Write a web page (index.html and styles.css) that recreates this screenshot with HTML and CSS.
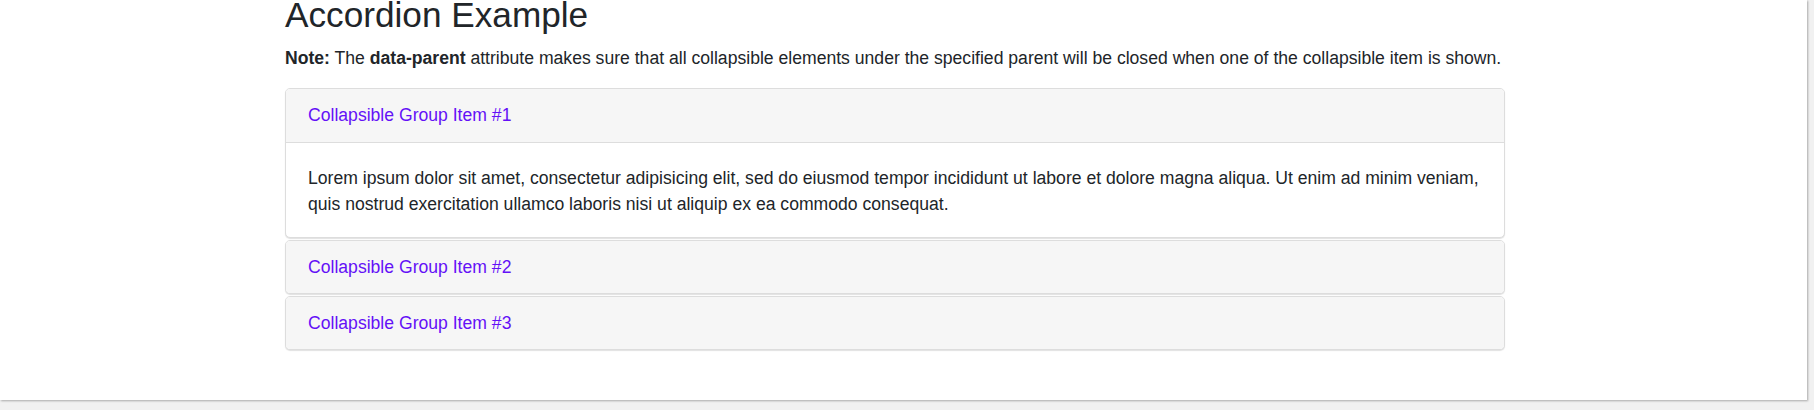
FILE: index.html
```html
<!DOCTYPE html>
<html lang="en">
<head>
<meta charset="utf-8">
<title>Accordion Example</title>
<link rel="stylesheet" href="styles.css">
</head>
<body>
<div class="frame">
  <div class="container">
    <h2 class="title">Accordion Example</h2>
    <p class="note"><strong>Note:</strong> The <strong>data-parent</strong> attribute makes sure that all collapsible elements under the specified parent will be closed when one of the collapsible item is shown.</p>
    <div class="panel-group">
      <div class="panel">
        <div class="panel-heading"><a class="panel-link" href="#c1">Collapsible Group Item #1</a></div>
        <div class="panel-body">Lorem ipsum dolor sit amet, consectetur adipisicing elit, sed do eiusmod tempor incididunt ut labore et dolore magna aliqua. Ut enim ad minim veniam, quis nostrud exercitation ullamco laboris nisi ut aliquip ex ea commodo consequat.</div>
      </div>
      <div class="panel">
        <div class="panel-heading"><a class="panel-link" href="#c2">Collapsible Group Item #2</a></div>
      </div>
      <div class="panel">
        <div class="panel-heading"><a class="panel-link" href="#c3">Collapsible Group Item #3</a></div>
      </div>
    </div>
  </div>
</div>
</body>
</html>
```

FILE: styles.css
```css
html, body {
  margin: 0;
  padding: 0;
}
body {
  background: #f1f1f1;
  font-family: "Liberation Sans", Arial, Helvetica, sans-serif;
  color: #212529;
  width: 1814px;
  height: 410px;
  overflow: hidden;
}
.frame {
  width: 1807px;
  height: 400px;
  background: #ffffff;
  box-shadow: 1px 1px 2px rgba(0, 0, 0, 0.3);
  overflow: hidden;
}
.container {
  width: 1220px;
  padding-left: 285px;
  padding-top: 1px;
}
.title {
  font-size: 35.2px;
  line-height: 28px;
  font-weight: normal;
  margin: 0 0 16px 0;
  color: #212529;
}
.note {
  font-size: 17.6px;
  line-height: 26.4px;
  margin: 0 0 17px 0;
}
.note strong {
  font-weight: bold;
}
.panel-group {
  display: flex;
  flex-direction: column;
  gap: 2px;
}
.panel {
  border: 1px solid #dddddd;
  border-radius: 5px;
  background: #ffffff;
  box-shadow: 0 1px 1px rgba(0, 0, 0, 0.12);
  overflow: hidden;
}
.panel-heading {
  background: #f6f6f6;
  padding: 13px 22px;
  font-size: 17.6px;
  line-height: 26.4px;
}
.panel-link {
  color: #6411f7;
  text-decoration: none;
}
.panel-body {
  border-top: 1px solid #dddddd;
  padding: 22px 22px 19px 22px;
  font-size: 17.6px;
  line-height: 26.4px;
}
```
